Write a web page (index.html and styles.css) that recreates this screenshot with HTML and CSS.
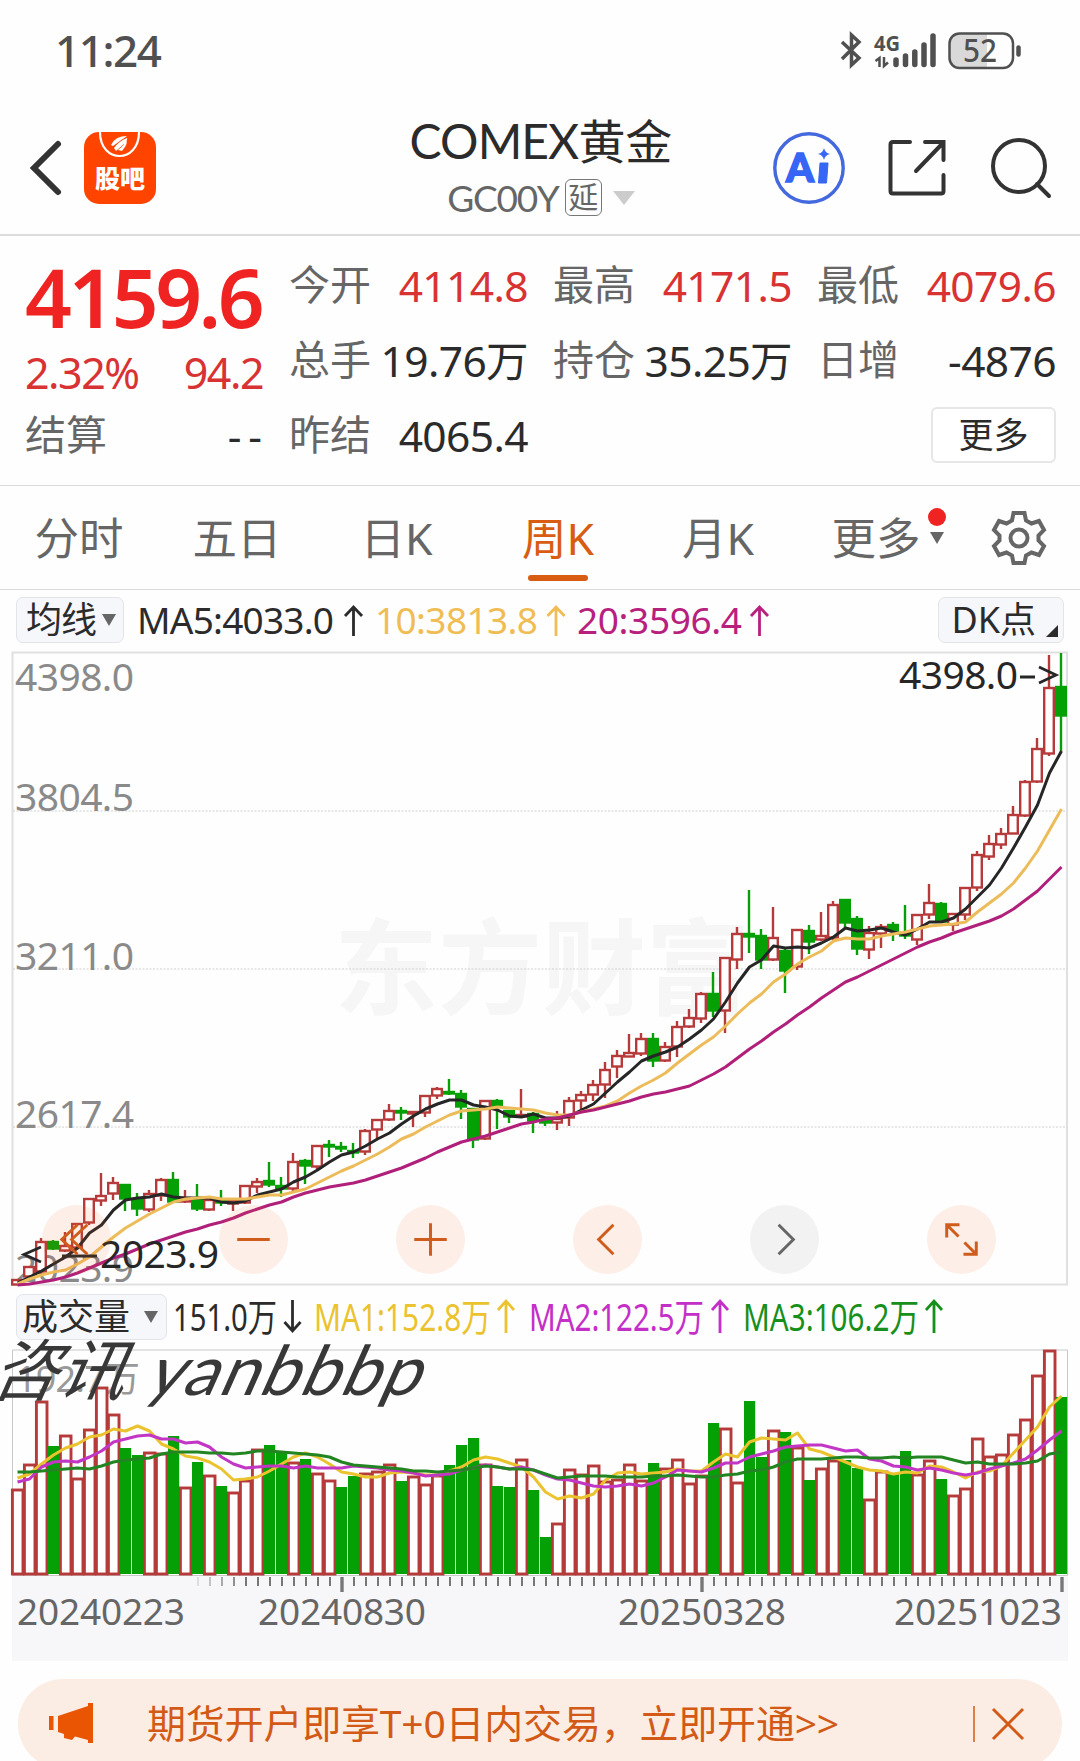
FILE: index.html
```
<!DOCTYPE html>
<html lang="zh-CN">
<head>
    <meta charset="UTF-8">
    <meta name="viewport" content="width=device-width, initial-scale=1.0">
    <title>COMEX黄金</title>
    <link rel="stylesheet" href="styles.css">
</head>
<body>

    <div class="status">
        <span class="time">11:24</span>
        <svg class="status-icons" width="190" height="44" viewBox="836 28 190 44">
            <path class="bt" d="M842 42L859 58L851.500 65V35L859 42L842 59"/>
            <text class="net" x="874" y="51" textLength="26" lengthAdjust="spacingAndGlyphs">4G</text>
            <path class="arrows" d="M875.500 61L879.500 58V67M884 57V66L888 62.500"/>
            <path class="bars" d="M896 60V64.500M905.500 56V64.500M914.800 52V64.500M924 45V64.500M933 36V64.500"/>
            <path class="charge" d="M987 34H960q-10 0-10 10v14q0 10 10 10h27z"/>
            <rect class="battery" x="949.500" y="33.500" width="63.500" height="34.500" rx="10"/>
            <path class="cap" d="M1018.500 47.500v7"/>
            <text class="level" x="963" y="62" textLength="34" lengthAdjust="spacingAndGlyphs">52</text>
        </svg>
    </div>

    <div class="header">
        <svg class="back" width="34" height="58" viewBox="0 0 34 58"><path d="M29 5L5 29L29 53"/></svg>
        <div class="logo">
            <svg width="44" height="28" viewBox="0 0 44 28">
                <path class="ring" d="M2 0C2 32 41 32 41 0"/>
                <path class="flame" d="M13 13q4-9 16-9q-3 2-14 10zM16 16q5-7 13-10q2 2-11 13zM20 18q7-5 8-11q3 4-4 12z"/>
            </svg>
            <span>股吧</span>
        </div>
        <div class="title">
            <div class="name"><span class="latin">COMEX</span>黄金</div>
            <div class="code"><span class="latin">GC00Y</span><i class="delay">延</i><i class="down"></i></div>
        </div>
        <div class="tools">
            <svg width="74" height="74" viewBox="0 0 74 74">
                <circle cx="37" cy="37" r="34.200" fill="none" stroke="#4468dd" stroke-width="3.400"/>
                <text class="ai" x="14" y="50.500" textLength="28" lengthAdjust="spacingAndGlyphs">A</text>
                <path d="M48 32h8l-1.500 20h-8z" fill="#3765f5" stroke="#3765f5" stroke-linejoin="round"/>
                <path d="M52 17q1 5 6 6q-5 1-6 6q-1-5-6-6q5-1 6-6z" fill="#3765f5"/>
            </svg>
            <svg class="line-icon" width="60" height="60" viewBox="0 0 60 60">
                <path d="M22 4H5q-2.500 0-2.500 2.500V53q0 2.500 2.500 2.500H53q2.500 0 2.500-2.500V37M37 4H55.500V22M54 6L28 33"/>
            </svg>
            <svg class="line-icon" width="62" height="62" viewBox="0 0 62 62">
                <circle cx="29" cy="29" r="26"/><path d="M47 47L59 59"/>
            </svg>
        </div>
    </div>

    <div class="quote">
        <div class="main">
            <div class="price">4159.6</div>
            <div class="change red"><span>2.32%</span><span>94.2</span></div>
            <div class="cell"><label>结算</label><b class="none">--</b></div>
        </div>
        <div class="grid">
            <div class="cell"><label>今开</label><b class="red">4114.8</b></div>
            <div class="cell"><label>最高</label><b class="red">4171.5</b></div>
            <div class="cell"><label>最低</label><b class="red">4079.6</b></div>
            <div class="cell"><label>总手</label><b>19.76万</b></div>
            <div class="cell"><label>持仓</label><b>35.25万</b></div>
            <div class="cell"><label>日增</label><b>-4876</b></div>
            <div class="cell"><label>昨结</label><b>4065.4</b></div>
            <div></div>
            <div class="more-wrap"><button class="more">更多</button></div>
        </div>
    </div>

    <ul class="tabs">
        <li>分时</li>
        <li>五日</li>
        <li>日K</li>
        <li class="active">周K</li>
        <li>月K</li>
        <li class="has-dot">更多<i class="dot"></i><i class="down"></i></li>
        <li class="gear">
            <svg width="56" height="56" viewBox="0 0 56 56">
                <path d="M22.500 3h11l1.500 7.500l5.500 3l7.500-2.500l5 9l-5.500 5.500v5l5.500 5.500l-5 9l-7.500-2.500l-5.500 3l-1.500 7.500h-11l-1.500-7.500l-5.500-3l-7.500 2.500l-5-9l5.500-5.500v-5l-5.500-5.500l5-9l7.500 2.500l5.500-3z"/>
                <circle cx="28" cy="28" r="8.500"/>
            </svg>
        </li>
    </ul>

    <div class="legend">
        <div class="pick avg">均线<i class="down"></i></div>
        <svg class="ma" width="650" height="60" viewBox="130 590 650 60">
            <g class="c-black"><text x="137" y="633.500" textLength="197">MA5:4033.0</text><path d="M353.500 636V607M345 616L353.500 607L362 616"/></g>
            <g class="c-gold"><text x="375" y="633.500" textLength="163">10:3813.8</text><path d="M556 636V607M547.500 616L556 607L564.500 616"/></g>
            <g class="c-purple"><text x="577" y="633.500" textLength="165">20:3596.4</text><path d="M759.500 636V607M751 616L759.500 607L768 616"/></g>
        </svg>
        <div class="pick dk">DK点<i class="corner"></i></div>
    </div>

    <div class="price-chart">
        <svg id="kline" width="1080" height="638" viewBox="0 650 1080 638">
            <text class="brand" x="334" y="1007" textLength="416">东方财富</text>
            <g class="frame">
                <path d="M12.500 652.500H1067V1284.500H12.500z"/>
                <path class="dots" d="M13 811H1067M13 969H1067M13 1127H1067"/>
            </g>
            <g class="axis">
                <text x="15" y="690.500" textLength="119">4398.0</text>
                <text x="15" y="811" textLength="119">3804.5</text>
                <text x="15" y="969.500" textLength="119">3211.0</text>
                <text x="15" y="1127.500" textLength="119">2617.4</text>
                <text x="15" y="1282" textLength="119">2023.9</text>
            </g>
            <g id="candles"></g>
            <g id="averages"></g>
            <g class="mark">
                <text x="899" y="688.500" textLength="119">4398.0</text>
                <text x="100" y="1267.500" textLength="119">2023.9</text>
                <path d="M1020 677h15M1039 667L1056 675L1039 683M41 1247L24 1254.500L41 1262M62 1256h35"/>
            </g>
        </svg>
        <div class="controls">
            <button><svg viewBox="0 0 70 70"><path d="M36 20L20 35L36 50M46 20L30 35L46 50"/></svg></button>
            <button><svg viewBox="0 0 70 70"><path d="M18.500 35h33"/></svg></button>
            <button><svg viewBox="0 0 70 70"><path d="M18.500 35h33M35 18.500v33"/></svg></button>
            <button><svg viewBox="0 0 70 70"><path d="M41 20L26 35L41 50"/></svg></button>
            <button class="off"><svg viewBox="0 0 70 70"><path d="M29 20L44 35L29 50"/></svg></button>
            <button><svg viewBox="0 0 70 70"><path d="M33 20H20V33M20 20L32 32M37 50H50V37M50 50L38 38"/></svg></button>
        </div>
    </div>

    <div class="legend vol">
        <div class="pick amount">成交量<i class="down"></i></div>
        <svg class="ma" width="800" height="58" viewBox="170 1288 800 58">
            <g class="c-black"><text x="173" y="1331" textLength="104" lengthAdjust="spacingAndGlyphs">151.0万</text><path d="M292.500 1300V1331M284.500 1322L292.500 1331L300.500 1322"/></g>
            <g class="c-yellow"><text x="314" y="1331" textLength="177" lengthAdjust="spacingAndGlyphs">MA1:152.8万</text><path d="M506 1333V1301M498 1310L506 1301L514 1310"/></g>
            <g class="c-violet"><text x="529" y="1331" textLength="175" lengthAdjust="spacingAndGlyphs">MA2:122.5万</text><path d="M720 1333V1301M712 1310L720 1301L728 1310"/></g>
            <g class="c-green"><text x="743" y="1331" textLength="176" lengthAdjust="spacingAndGlyphs">MA3:106.2万</text><path d="M934 1333V1301M926 1310L934 1301L942 1310"/></g>
        </svg>
    </div>

    <div class="vol-chart">
        <svg id="volume" width="1080" height="315" viewBox="0 1346 1080 315">
            <rect x="12" y="1576" width="1056" height="85" fill="#f7f7fa"/>
            <text class="max" x="16" y="1392" textLength="124">192.7万</text>
            <path class="box" d="M12.500 1350H1067.500V1575.500H12.500z"/>
            <g id="bars"></g>
            <g id="ticks"></g>
            <g class="dates">
                <text x="17" y="1624.500" textLength="168">20240223</text>
                <text x="258" y="1624.500" textLength="168">20240830</text>
                <text x="618" y="1624.500" textLength="168">20250328</text>
                <text x="894" y="1624.500" textLength="168">20251023</text>
            </g>
        </svg>
        <div class="stamp"><span>咨讯</span><span>yanbbbp</span></div>
    </div>

    <div class="banner">
        <svg width="48" height="44" viewBox="0 0 48 44"><path d="M1 14h4.500v14H1zM10 14L40 4V1h5v40h-5v-3L27 34.500l-3 3.500l-8-2v-4l-6-2z"/></svg>
        <span>期货开户即享T+0日内交易，立即开通&gt;&gt;</span>
        <svg class="close" width="54" height="40" viewBox="0 0 54 40"><path d="M1 2v36" stroke-width="1.500"/><path d="M20 5L50 35M50 5L20 35" stroke-width="3"/></svg>
    </div>

    <script src="chart.js"></script>
</body>
</html>
```
FILE: styles.css
```
*{
    box-sizing: border-box;
}
body{
    margin: 0;
    width: 1080px;
    height: 1761px;
    overflow: hidden;
    background-color: #fefefe;
    color: #2b2b2b;
    font-family: "Noto Sans", "Noto Sans CJK SC", sans-serif;
}
ul{
    list-style: none;
    margin: 0;
    padding: 0;
}
i, b{
    font-style: normal;
    font-weight: 400;
}
button{
    padding: 0;
    font-family: inherit;
}
svg{
    display: block;
    flex: none;
}
.red{
    color: #d93232;
}
.latin{
    font-family: Lato, "Noto Sans", sans-serif;
}
.down{
    display: inline-block;
    border-left: 7px solid transparent;
    border-right: 7px solid transparent;
    border-top: 12px solid #666;
}

/* status bar */
.status{
    height: 105px;
    padding: 28px 54px 0 55px;
    display: flex;
    justify-content: space-between;
}
.time{
    font-size: 44px;
    line-height: 45px;
    font-weight: 500;
    letter-spacing: -1.4px;
    color: #505050;
}
.status-icons{
    overflow: visible;
}
.status-icons text{
    fill: #505050;
}
.status-icons path, .battery{
    fill: none;
    stroke: #505050;
    stroke-width: 3.5;
}
.status-icons .net{
    font-size: 22px;
    font-weight: 700;
}
.status-icons .level{
    font-size: 32px;
    font-weight: 500;
}
.status-icons .arrows{
    stroke-width: 2.5;
}
.status-icons .bars{
    stroke-width: 5.5;
    stroke-linecap: round;
}
.status-icons .charge{
    fill: #d9d9d9;
    stroke: none;
}
.status-icons .battery{
    stroke-width: 2.5;
}
.status-icons .cap{
    stroke-width: 4.5;
    stroke-linecap: round;
}

/* header */
.header{
    height: 131px;
    border-bottom: 2px solid #dcdcdc;
    padding: 0 28px 4px 29px;
    display: grid;
    grid-template-columns: 55px 72px 1fr 280px;
    align-items: center;
}
.back path{
    fill: none;
    stroke: #333;
    stroke-width: 6;
    stroke-linecap: round;
}
.logo{
    height: 72px;
    border-radius: 15px;
    background-color: #ff4400;
    color: #fff;
    display: flex;
    flex-direction: column;
    align-items: center;
}
.logo span{
    font-size: 25px;
    line-height: 34px;
    font-weight: 900;
    font-family: "Noto Sans CJK SC", sans-serif;
}
.ring{
    fill: none;
    stroke: #fff;
    stroke-width: 2.2;
}
.flame{
    fill: #fff;
}
.title{
    display: flex;
    flex-direction: column;
    align-items: center;
    padding-left: 122px;
    width: 648px;
    margin-right: -100px;
}
.name{
    font-size: 47px;
    line-height: 56px;
    white-space: nowrap;
}
.name .latin{
    font-size: 48px;
    letter-spacing: -0.9px;
}
.code{
    display: flex;
    align-items: center;
    font-size: 37px;
    line-height: 50px;
    padding-top: 4px;
    color: #666;
}
.code .latin{
    letter-spacing: -1.3px;
}
.delay{
    width: 37px;
    height: 37px;
    margin-left: 6px;
    border: 1.500px solid #777;
    border-radius: 6px;
    font-size: 30px;
    line-height: 33px;
    text-align: center;
}
.code .down{
    margin-left: 11px;
    border-width: 14px 11px 0;
    border-top-color: #ccc;
}
.tools{
    display: flex;
    align-items: center;
    justify-content: space-between;
}
.line-icon{
    fill: none;
    stroke: #333;
    stroke-width: 4;
    stroke-linecap: round;
}
.ai{
    fill: #3765f5;
    stroke: #3765f5;
    stroke-width: 1.5;
    font: 900 40px Lato, sans-serif;
}

/* quote */
.quote{
    height: 250px;
    border-bottom: 1.500px solid #d8dadb;
    padding: 14px 25px 0;
    display: grid;
    grid-template-columns: 238px 1fr;
    column-gap: 26px;
}
.price{
    height: 92px;
    font-size: 82px;
    line-height: 92px;
    font-weight: 600;
    letter-spacing: -3.5px;
    color: #f02323;
}
.change{
    height: 62px;
    display: flex;
    justify-content: space-between;
    font-size: 43px;
    line-height: 62px;
    letter-spacing: -1.5px;
}
.grid{
    display: grid;
    grid-template-columns: repeat(3, 239px);
    grid-template-rows: repeat(3, 75px);
    column-gap: 25px;
    margin-top: -2px;
}
.cell{
    height: 75px;
    display: flex;
    justify-content: space-between;
    align-items: center;
    white-space: nowrap;
}
.main .cell{
    height: 63px;
}
.cell label{
    font-size: 41px;
    line-height: 60px;
    padding-bottom: 3px;
    color: #666;
}
.cell b{
    font-size: 42.5px;
    line-height: 60px;
    letter-spacing: -0.6px;
}
.cell .none{
    letter-spacing: 7px;
    margin-right: -6px;
}
.more-wrap{
    display: flex;
    justify-content: flex-end;
    align-items: center;
}
.more{
    width: 125px;
    height: 56px;
    margin-bottom: 1px;
    border: 2px solid #e6e6e6;
    border-radius: 6px;
    background-color: #fff;
    color: #2b2b2b;
    font-size: 35px;
    line-height: 48px;
}

/* tabs */
.tabs{
    height: 104px;
    border-bottom: 1.500px solid #d8dadb;
    display: grid;
    grid-template-columns: 158px 158px 161px 162px 158px 158px 125px;
    font-size: 44.500px;
    line-height: 103px;
    color: #666;
    text-align: center;
}
.tabs li{
    position: relative;
}
.tabs .active{
    color: #d85c12;
}
.tabs .active::after{
    content: "";
    position: absolute;
    left: 51px;
    bottom: 8px;
    width: 60px;
    height: 6px;
    border-radius: 3px;
    background-color: #d85c12;
}
.tabs .dot{
    position: absolute;
    right: 9px;
    top: 22px;
    width: 18px;
    height: 18px;
    border-radius: 50%;
    background-color: #f02323;
}
.tabs .down{
    position: absolute;
    right: 11px;
    top: 46px;
}
.gear{
    display: flex;
    align-items: center;
    justify-content: center;
    padding-left: 3px;
}
.gear svg{
    fill: none;
    stroke: #666;
    stroke-width: 4;
}

/* legend rows */
.legend{
    height: 60px;
    padding: 0 16px;
    display: flex;
    align-items: center;
}
.legend.vol{
    height: 58px;
}
.pick{
    height: 46px;
    border: 1.500px solid #e2e4e8;
    border-radius: 7px;
    background-color: #f6f7fa;
    font-size: 36px;
    line-height: 42px;
    white-space: nowrap;
    display: flex;
    align-items: center;
}
.avg{
    width: 108px;
    margin-right: 6px;
    padding-left: 9px;
    letter-spacing: -1px;
    gap: 6px;
}
.dk{
    width: 127px;
    margin-left: 158px;
    padding-left: 13px;
}
.amount{
    width: 151px;
    margin-right: 3px;
    padding-left: 5px;
    gap: 14px;
}
.corner{
    margin: 22px 0 0 10px;
    border-left: 12px solid transparent;
    border-bottom: 12px solid #2b2b2b;
}
.ma text{
    font-size: 37px;
}
.vol .ma text{
    font-size: 38px;
}
.ma path{
    fill: none;
    stroke-width: 2.8;
}
.c-black{ fill: #2b2b2b; }
.c-gold{ fill: #f0bd55; }
.c-purple{ fill: #b8207d; }
.c-yellow{ fill: #eac32e; }
.c-violet{ fill: #c42fc8; }
.c-green{ fill: #17901b; }
.c-black path{ stroke: #2b2b2b; }
.c-gold path{ stroke: #f0bd55; }
.c-purple path{ stroke: #b8207d; }
.c-yellow path{ stroke: #eac32e; }
.c-violet path{ stroke: #c42fc8; }
.c-green path{ stroke: #17901b; }

/* charts */
.price-chart, .vol-chart{
    position: relative;
}
.frame path{
    fill: none;
    stroke: #e0e0e0;
    stroke-width: 2;
}
.frame .dots{
    stroke: #d0d0d0;
    stroke-width: 1;
    stroke-dasharray: 2 1.5;
}
.brand{
    fill: #f6f6f6;
    font-size: 104px;
    font-weight: 700;
    font-family: "Noto Sans CJK SC", sans-serif;
}
.axis{
    fill: #8a8a8a;
    font-size: 39px;
}
.mark{
    fill: #262626;
    font-size: 39px;
}
.mark path{
    fill: none;
    stroke: #262626;
    stroke-width: 2.8;
}
.up{
    fill: none;
    stroke: #b73a3a;
    stroke-width: 2.4;
}
rect.up{
    fill: #fefefe;
}
#bars .up{
    stroke-width: 2.9;
}
.fall{
    fill: #05a005;
    stroke: #05a005;
    stroke-width: 2.4;
}
.curve{
    fill: none;
    stroke-width: 3;
    stroke-linejoin: round;
}
.controls{
    position: absolute;
    left: 42px;
    right: 84px;
    bottom: 14px;
    display: flex;
    justify-content: space-between;
}
.controls button{
    width: 69px;
    height: 69px;
    border: 0;
    border-radius: 50%;
    background-color: rgba(250, 100, 30, 0.1);
}
.controls path{
    fill: none;
    stroke: #d05c1c;
    stroke-width: 3;
}
.controls .off{
    background-color: #f2f2f2;
}
.controls .off path{
    stroke: #666;
}
.max{
    fill: #999;
    font-size: 36px;
}
.box{
    fill: none;
    stroke: #c8c8c8;
}
.tick{
    stroke: #777;
    stroke-width: 2;
}
.tick.major{
    stroke-width: 3.4;
}
.dates{
    fill: #666;
    font-size: 37px;
}
.stamp{
    position: absolute;
    left: 0;
    top: -14px;
    display: flex;
    gap: 21px;
    font-size: 67px;
    line-height: 74px;
    color: #383838;
    transform: skewX(-24deg);
}
.stamp span:last-child{
    font-family: Lato, sans-serif;
    font-size: 69px;
    letter-spacing: 1.8px;
}

/* banner */
.banner{
    height: 90px;
    margin: 18px 18px 0;
    padding: 0 35px 0 30px;
    border-radius: 45px;
    background-color: #fcede4;
    color: #d25a16;
    display: flex;
    align-items: center;
    font-size: 39px;
}
.banner span{
    margin: -6px 0 0 51px;
    letter-spacing: -0.2px;
    white-space: nowrap;
}
.banner path{
    fill: #ea5504;
}
.banner .close{
    margin-left: auto;
}
.banner .close path{
    fill: none;
    stroke: #d25a16;
}
```
FILE: chart.js
```
var STEP = 12, START = 17;

// high, body top, body bottom, low, direction
var candles = [
    [1280,1280,1285,1285,1],[1267,1267,1277,1277,1],[1238,1242,1272,1274,1],[1240,1242,1249,1250,0],
    [1232,1246,1251,1252,1],[1223,1224,1248,1250,1],[1198,1199,1223,1225,1],[1173,1196,1201,1206,1],
    [1177,1183,1194,1200,1],[1184,1185,1199,1211,0],[1193,1199,1209,1216,0],[1190,1194,1210,1212,1],
    [1178,1180,1196,1201,1],[1172,1180,1202,1203,0],[1190,1198,1202,1203,1],[1184,1199,1209,1211,0],
    [1197,1200,1210,1211,1],[1190,1200,1203,1206,0],[1201,1201,1204,1211,1],[1185,1186,1203,1204,1],
    [1178,1182,1187,1193,1],[1162,1181,1185,1187,0],[1177,1186,1189,1197,0],[1153,1162,1189,1193,1],
    [1159,1161,1166,1184,0],[1146,1146,1167,1169,1],[1140,1145,1147,1157,0],[1142,1147,1149,1152,0],
    [1143,1151,1153,1158,0],[1129,1131,1152,1155,1],[1119,1120,1130,1140,1],[1104,1111,1120,1121,1],
    [1107,1111,1113,1120,0],[1111,1112,1114,1127,1],[1096,1096,1113,1117,1],[1087,1089,1096,1099,1],
    [1079,1092,1094,1095,0],[1090,1094,1107,1119,0],[1108,1109,1140,1148,0],[1101,1101,1139,1140,1],
    [1099,1101,1107,1129,0],[1110,1111,1117,1123,0],[1089,1115,1117,1118,1],[1112,1114,1121,1133,0],
    [1118,1121,1123,1126,0],[1111,1119,1123,1130,1],[1097,1101,1118,1126,1],[1091,1095,1101,1109,1],
    [1080,1085,1095,1101,1],[1062,1070,1085,1098,1],[1050,1056,1067,1078,1],[1034,1053,1057,1057,1],
    [1033,1039,1054,1056,1],[1033,1039,1061,1067,0],[1042,1047,1061,1062,1],[1021,1027,1047,1057,1],
    [1009,1018,1027,1028,1],[992,994,1019,1023,1],[972,994,1011,1017,0],[957,958,1011,1033,1],
    [927,934,960,969,1],[890,934,937,953,0],[929,936,960,969,0],[907,938,960,961,1],
    [949,951,971,993,0],[929,930,967,970,1],[925,931,942,954,0],[912,936,940,941,1],
    [901,905,938,940,1],[899,900,923,928,0],[916,919,949,955,0],[926,933,950,959,1],
    [924,927,934,948,1],[922,925,931,941,0],[905,933,936,939,0],[914,915,940,945,1],
    [884,903,915,919,1],[902,904,922,923,0],[914,914,925,931,1],[888,888,915,920,1],
    [851,855,888,891,1],[835,844,857,860,1],[828,834,845,849,1],[806,815,834,834,1],
    [780,782,816,817,1],[738,749,782,783,1],[655,688,754,756,1],[653,687,716,751,0]
];

var ma5 = [1283,1277,1271,1264,1257,1248,1233,1225,1210,1200,1198,1197,1194,1197,1198,1198,1198,1202,1203,1201,1195,1192,1189,1182,1177,1170,1162,1155,1152,1146,1139,1133,1124,1116,1109,1104,1100,1100,1105,1107,1110,1116,1117,1114,1118,1118,1116,1110,1104,1093,1082,1072,1061,1056,1052,1047,1039,1030,1019,1002,983,967,960,946,948,947,948,943,937,928,931,930,928,932,935,929,922,922,918,909,897,885,868,848,827,805,773,751];
var ma10 = [1284,1279,1275,1272,1270,1264,1257,1247,1237,1228,1221,1214,1208,1202,1199,1198,1197,1199,1199,1199,1197,1195,1195,1192,1189,1183,1177,1171,1166,1160,1154,1147,1139,1134,1127,1121,1115,1111,1110,1109,1107,1108,1109,1110,1113,1115,1115,1112,1109,1106,1101,1093,1086,1080,1073,1063,1054,1045,1037,1026,1014,1003,994,982,974,964,957,951,941,938,939,939,936,934,932,929,926,925,924,922,912,903,894,883,868,851,830,809];
var ma20 = [1285,1284,1282,1280,1277,1273,1268,1263,1258,1254,1249,1244,1240,1236,1232,1229,1225,1222,1218,1213,1209,1205,1202,1197,1193,1190,1187,1185,1183,1180,1176,1172,1168,1163,1158,1152,1147,1142,1139,1136,1132,1128,1124,1122,1119,1118,1115,1112,1110,1107,1104,1101,1097,1094,1092,1089,1086,1080,1074,1067,1058,1049,1041,1032,1024,1015,1007,998,990,982,977,971,965,959,953,947,942,938,933,929,925,921,916,909,900,891,879,867];

var vols = [1489,1464,1401,1446,1435,1478,1429,1387,1414,1448,1455,1452,1453,1436,1487,1462,1475,1486,1492,1480,1449,1445,1452,1462,1459,1473,1480,1487,1476,1473,1471,1464,1481,1476,1484,1475,1465,1445,1438,1464,1486,1487,1459,1490,1537,1523,1469,1474,1465,1481,1479,1464,1480,1463,1468,1459,1483,1475,1423,1428,1482,1401,1457,1430,1432,1447,1480,1468,1460,1460,1468,1499,1471,1474,1451,1474,1460,1479,1495,1488,1438,1456,1454,1434,1419,1375,1350,1397];
var v1 = [1478,1474,1464,1455,1448,1444,1437,1435,1429,1431,1426,1431,1444,1449,1456,1458,1462,1469,1480,1479,1477,1471,1464,1457,1453,1457,1464,1472,1474,1477,1477,1473,1472,1473,1475,1475,1471,1467,1460,1457,1459,1463,1467,1477,1492,1499,1496,1498,1494,1480,1473,1472,1474,1473,1472,1469,1471,1471,1462,1454,1457,1442,1438,1439,1440,1433,1449,1452,1457,1462,1467,1470,1471,1474,1472,1473,1466,1467,1472,1478,1472,1471,1466,1453,1440,1427,1407,1396];
var v2 = [1482,1479,1467,1462,1461,1462,1457,1451,1442,1439,1436,1435,1439,1439,1443,1442,1447,1457,1464,1468,1467,1466,1466,1468,1466,1468,1468,1468,1466,1467,1468,1470,1471,1473,1476,1475,1474,1470,1468,1465,1467,1469,1467,1470,1475,1479,1480,1483,1486,1487,1486,1484,1486,1483,1477,1470,1471,1472,1468,1463,1463,1457,1454,1451,1447,1446,1445,1445,1448,1451,1450,1459,1461,1466,1467,1470,1468,1470,1473,1475,1473,1469,1466,1463,1459,1450,1440,1431];
var v3 = [1472,1472,1471,1470,1469,1468,1469,1466,1462,1460,1459,1458,1454,1452,1452,1452,1453,1453,1454,1453,1451,1451,1452,1453,1454,1455,1457,1462,1465,1466,1467,1468,1469,1471,1471,1472,1471,1470,1468,1466,1467,1469,1469,1470,1474,1478,1477,1476,1476,1476,1477,1477,1477,1476,1476,1475,1476,1477,1477,1475,1474,1471,1470,1467,1462,1459,1459,1459,1458,1457,1457,1458,1458,1457,1458,1457,1457,1457,1460,1463,1462,1464,1464,1464,1463,1461,1454,1452];

function add(parent, tag, attrs){
    var el = document.createElementNS('http://www.w3.org/2000/svg', tag);
    for(var key in attrs) el.setAttribute(key, attrs[key]);
    document.getElementById(parent).appendChild(el);
}

function curve(parent, data, color){
    var points = data.map(function(y, i){
        return (START + 0.5 + i * STEP) + ',' + y;
    });
    add(parent, 'polyline', {'class': 'curve', points: points.join(' '), stroke: color});
}

candles.forEach(function(c, i){
    var x = START + i * STEP;
    var cls = c[4] ? 'up' : 'fall';
    var w = 9.6;
    add('candles', 'path', {'class': cls, d: 'M' + x + ' ' + c[0] + 'V' + c[3]});
    add('candles', 'rect', {'class': cls, x: x - w / 2, y: c[1], width: w, height: Math.max(c[2] - c[1] - 0.5, 1)});
});
curve('averages', ma5, '#262626');
curve('averages', ma10, '#ecbc5a');
curve('averages', ma20, '#b0207a');

vols.forEach(function(y, i){
    var x = START + i * STEP;
    if(candles[i][4] || i === 26){
        add('bars', 'rect', {'class': 'up', x: x - 4.6, y: y + 1, width: 10.6, height: 1573 - y});
    }else{
        add('bars', 'rect', {fill: '#05a005', x: x - 5, y: y, width: 11.2, height: 1574 - y});
    }
});
curve('bars', v1, '#eac32e');
curve('bars', v2, '#c236c6');
curve('bars', v3, '#228522');

for(var i = 15; i < 88; i++){
    var major = i === 27 || i === 57 || i === 87;
    add('ticks', 'path', {
        'class': major ? 'tick major' : 'tick',
        d: 'M' + (18 + i * STEP) + ' 1577V' + (major ? 1592 : 1586),
        opacity: i < 19 ? (i - 14) / 5 : 1
    });
}
```
